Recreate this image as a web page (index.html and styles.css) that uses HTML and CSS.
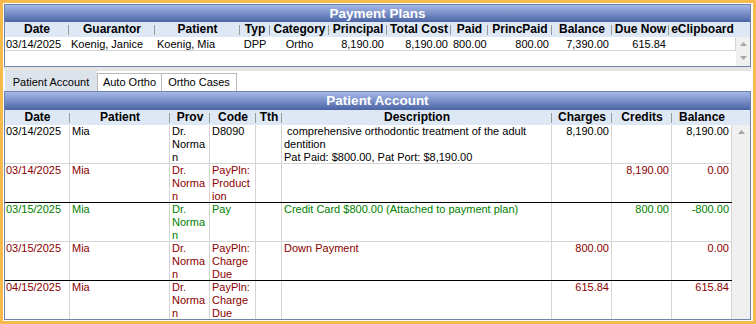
FILE: index.html
```html
<!DOCTYPE html>
<html lang="en">
<head>
    <meta charset="UTF-8">
    <title>Payment Plans</title>
    <link rel="stylesheet" href="styles.css">
</head>
<body>
    <div class="frame">
        <div class="grid plans">
            <div class="grid-title">Payment Plans</div>
            <div class="grid-head">
                <div>Date</div>
                <div>Guarantor</div>
                <div>Patient</div>
                <div>Typ</div>
                <div>Category</div>
                <div>Principal</div>
                <div>Total Cost</div>
                <div>Paid</div>
                <div>PrincPaid</div>
                <div>Balance</div>
                <div>Due Now</div>
                <div>eClipboard</div>
            </div>
            <div class="grid-body">
                <div class="rows">
                    <div class="row">
                        <div class="first">03/14/2025</div>
                        <div>Koenig, Janice</div>
                        <div>Koenig, Mia</div>
                        <div class="mid">DPP</div>
                        <div class="mid">Ortho</div>
                        <div class="num">8,190.00</div>
                        <div class="num">8,190.00</div>
                        <div class="num">800.00</div>
                        <div class="num">800.00</div>
                        <div class="num">7,390.00</div>
                        <div class="num">615.84</div>
                        <div class="last"></div>
                    </div>
                </div>
                <div class="vscroll">
                    <svg width="7" height="4" viewBox="0 0 7 4"><polygon points="0,4 3.5,0 7,4" fill="#a6a6a6"/></svg>
                    <svg width="7" height="4" viewBox="0 0 7 4"><polygon points="0,0 3.5,4 7,0" fill="#a6a6a6"/></svg>
                </div>
            </div>
        </div>

        <div class="splitter"></div>

        <div class="tabs">
            <div class="tab active">Patient Account</div>
            <div class="tab auto-ortho">Auto Ortho</div>
            <div class="tab ortho-cases">Ortho Cases</div>
        </div>

        <div class="grid account">
            <div class="grid-title">Patient Account</div>
            <div class="grid-head">
                <div>Date</div>
                <div>Patient</div>
                <div>Prov</div>
                <div>Code</div>
                <div>Tth</div>
                <div>Description</div>
                <div>Charges</div>
                <div>Credits</div>
                <div>Balance</div>
            </div>
            <div class="grid-body">
                <div class="rows">
                    <div class="row">
                        <div class="first">03/14/2025</div>
                        <div>Mia</div>
                        <div class="prov">Dr. Norman</div>
                        <div class="code">D8090</div>
                        <div></div>
                        <div class="desc"> comprehensive orthodontic treatment of the adult
dentition
Pat Paid: $800.00, Pat Port: $8,190.00</div>
                        <div class="num">8,190.00</div>
                        <div class="num"></div>
                        <div class="num">8,190.00</div>
                    </div>
                    <div class="row payplan day-end">
                        <div class="first">03/14/2025</div>
                        <div>Mia</div>
                        <div class="prov">Dr. Norman</div>
                        <div class="code">PayPln: Production</div>
                        <div></div>
                        <div class="desc"></div>
                        <div class="num"></div>
                        <div class="num">8,190.00</div>
                        <div class="num">0.00</div>
                    </div>
                    <div class="row payment">
                        <div class="first">03/15/2025</div>
                        <div>Mia</div>
                        <div class="prov">Dr. Norman</div>
                        <div class="code">Pay</div>
                        <div></div>
                        <div class="desc">Credit Card $800.00 (Attached to payment plan)</div>
                        <div class="num"></div>
                        <div class="num">800.00</div>
                        <div class="num">-800.00</div>
                    </div>
                    <div class="row payplan day-end">
                        <div class="first">03/15/2025</div>
                        <div>Mia</div>
                        <div class="prov">Dr. Norman</div>
                        <div class="code">PayPln: Charge Due</div>
                        <div></div>
                        <div class="desc">Down Payment</div>
                        <div class="num">800.00</div>
                        <div class="num"></div>
                        <div class="num">0.00</div>
                    </div>
                    <div class="row payplan">
                        <div class="first">04/15/2025</div>
                        <div>Mia</div>
                        <div class="prov">Dr. Norman</div>
                        <div class="code">PayPln: Charge Due</div>
                        <div></div>
                        <div class="desc"></div>
                        <div class="num">615.84</div>
                        <div class="num"></div>
                        <div class="num">615.84</div>
                    </div>
                </div>
                <div class="vscroll">
                    <svg width="7" height="4" viewBox="0 0 7 4"><polygon points="0,4 3.5,0 7,4" fill="#a6a6a6"/></svg>
                </div>
            </div>
        </div>
    </div>
</body>
</html>
```

FILE: styles.css
```css
body {
    margin: 0;
    font-family: "Liberation Sans", Arial, sans-serif;
    font-size: 11px;
    color: #000;
}
.frame {
    width: 756px;
    height: 324px;
    box-sizing: border-box;
    border: 3px solid #f6b94c;
    padding: 1px 2px 1px 1px;
    background: #fff;
    display: flex;
    flex-direction: column;
}
.grid {
    border: 1px solid #7083a8;
    display: flex;
    flex-direction: column;
    overflow: hidden;
    box-sizing: border-box;
}
.plans {
    height: 63px;
    flex: none;
}
.account {
    flex: 1;
    min-height: 0;
}
.grid-title {
    background: linear-gradient(#a6b8e8, #4a64a4);
    color: #fff;
    font-size: 13.5px;
    font-weight: bold;
    text-align: center;
    flex: none;
}
.plans .grid-title {
    height: 17px;
    line-height: 17px;
}
.account .grid-title {
    height: 18px;
    line-height: 18px;
}
.grid-head {
    display: grid;
    height: 15px;
    line-height: 15px;
    background: #dee7f4;
    font-size: 12px;
    font-weight: bold;
    text-align: center;
    white-space: nowrap;
    flex: none;
}
.grid-head > div {
    overflow: hidden;
}
.grid-head > div:not(:last-child) {
    background: linear-gradient(#9a9a9a, #9a9a9a) no-repeat right 3px / 1px 10px;
}
.plans .grid-head,
.plans .row {
    grid-template-columns: 64px 86px 85px 30px 59px 58px 64px 37px 64px 60px 57px 67px;
}
.account .grid-head,
.account .row {
    grid-template-columns: 65px 100px 40px 46px 26px 270px 60px 60px 60px;
}
.grid-body {
    display: flex;
    flex: 1;
    min-height: 0;
}
.rows {
    overflow: hidden;
}
.row {
    display: grid;
    box-sizing: border-box;
    border-bottom: 1px solid #d5d5d5;
}
.row > div {
    padding: 0 2px;
    overflow: hidden;
}
.row > .first {
    padding-left: 1px;
}
.row > .num {
    text-align: right;
}
.row > .mid {
    text-align: center;
}

/* payment plans grid */
.plans .row {
    height: 14px;
    line-height: 12px;
    white-space: nowrap;
}
.plans .row > div {
    padding-top: 1px;
}
.plans .row > .num {
    padding-right: 3px;
}
.plans .row > .last {
    border-right: 1px solid #d5d5d5;
}

/* patient account grid */
.account .row {
    height: 39px;
    line-height: 13px;
}
.account .row > div {
    border-right: 1px solid #d5d5d5;
    overflow-wrap: anywhere;
}
.account .row > .prov {
    padding-right: 2px;
}
.account .row > .code {
    padding-right: 4px;
}
.account .row > .desc {
    white-space: pre-wrap;
}
.account .row.day-end {
    border-bottom-color: #000;
}
.row.payplan {
    color: #8b0000;
}
.row.payment {
    color: #008000;
}

.vscroll {
    flex: 1;
    background: #f0f0f0;
    display: flex;
    flex-direction: column;
    align-items: center;
}
.vscroll svg {
    display: block;
}
.plans .vscroll {
    justify-content: space-between;
    padding: 5px 0 6px;
}
.account .vscroll {
    padding-top: 5px;
}

.splitter {
    height: 4px;
    background: #e4e4e4;
    flex: none;
}
.tabs {
    display: flex;
    align-items: flex-end;
    height: 20px;
    padding-left: 1px;
    flex: none;
}
.tab {
    line-height: 13px;
    padding: 2px 0;
    border: 1px solid #b9b9b9;
    border-bottom: 0;
    background: #fff;
    text-align: center;
    box-sizing: border-box;
}
.tab.active {
    width: 92px;
    border: 0;
    padding: 5px 0 2px;
    background: #dde3ea;
}
.tab.auto-ortho {
    width: 65px;
}
.tab.ortho-cases {
    width: 75px;
    border-left: 0;
}
```
